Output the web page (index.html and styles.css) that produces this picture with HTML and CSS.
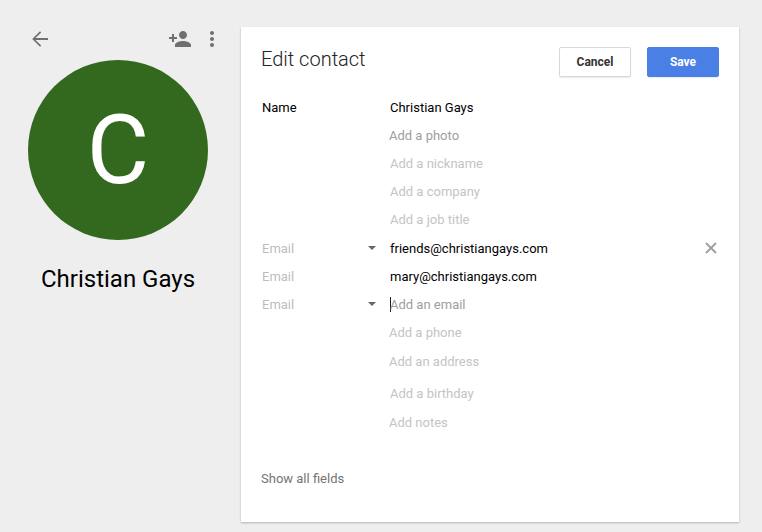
FILE: index.html
```html
<!DOCTYPE html>
<html lang="en">
<head>
    <meta charset="UTF-8">
    <title>Edit contact</title>
    <link rel="stylesheet" href="styles.css">
</head>
<body>
    <div class="page">
        <aside class="side">
            <div class="side-icons">
                <svg class="icon" viewBox="0 0 24 24"><path d="M20 11.1H7.5l5.7-5.7L12 4.2 4.2 12l7.8 7.8 1.2-1.2-5.7-5.7H20z"/></svg>
                <span class="side-actions">
                    <svg class="icon" viewBox="0 0 24 24"><path d="M15 12c2.21 0 4-1.79 4-4s-1.79-4-4-4-4 1.79-4 4 1.79 4 4 4zm-9-2V7H4v3H1v2h3v3h2v-3h3v-2H6zm9 4c-2.67 0-8 1.34-8 4v2h16v-2c0-2.66-5.33-4-8-4z"/></svg>
                    <svg class="icon" viewBox="0 0 24 24"><path d="M12 8c1.1 0 2-.9 2-2s-.9-2-2-2-2 .9-2 2 .9 2 2 2zm0 2c-1.1 0-2 .9-2 2s.9 2 2 2 2-.9 2-2-.9-2-2-2zm0 6c-1.1 0-2 .9-2 2s.9 2 2 2 2-.9 2-2-.9-2-2-2z"/></svg>
                </span>
            </div>
            <div class="avatar">C</div>
            <div class="side-name">Christian Gays</div>
        </aside>

        <main class="card">
            <div class="card-head">
                <h2>Edit contact</h2>
                <div class="buttons">
                    <button type="button" class="button">Cancel</button>
                    <button type="button" class="button button-save">Save</button>
                </div>
            </div>

            <div class="row">
                <span class="row-label dark">Name</span>
                <span class="value">Christian Gays</span>
            </div>
            <div class="row"><span class="row-label"></span><span class="hint mid shift">Add a photo</span></div>
            <div class="row"><span class="row-label"></span><span class="hint">Add a nickname</span></div>
            <div class="row"><span class="row-label"></span><span class="hint">Add a company</span></div>
            <div class="row row-last"><span class="row-label"></span><span class="hint">Add a job title</span></div>

            <div class="row">
                <span class="row-label">Email<i class="caret"></i></span>
                <span class="value">friends@christiangays.com</span>
                <svg class="close" viewBox="0 0 12 12"><path d="M1 1l10 10M11 1L1 11"/></svg>
            </div>
            <div class="row">
                <span class="row-label">Email</span>
                <span class="value">mary@christiangays.com</span>
            </div>
            <div class="row">
                <span class="row-label">Email<i class="caret"></i></span>
                <span class="hint mid cursor">Add an email</span>
            </div>
            <div class="row"><span class="row-label"></span><span class="hint shift">Add a phone</span></div>
            <div class="row row-address"><span class="row-label"></span><span class="hint shift">Add an address</span></div>
            <div class="row row-birthday"><span class="row-label"></span><span class="hint">Add a birthday</span></div>
            <div class="row row-notes"><span class="row-label"></span><span class="hint shift">Add notes</span></div>

            <div class="show-all">Show all fields</div>
        </main>
    </div>
</body>
</html>
```

FILE: styles.css
```css
body {
    font-family: Roboto, Arial, sans-serif;
    background-color: #eeeeee;
    margin: 0;
    padding: 0;
}
.page {
    display: flex;
    width: 762px;
    height: 532px;
    overflow: hidden;
}
.side {
    width: 241px;
    flex: none;
    padding: 27px 0 0 28px;
    box-sizing: border-box;
}
.side-icons {
    display: flex;
    justify-content: space-between;
    width: 196px;
    height: 24px;
}
.side-actions {
    display: flex;
    gap: 8px;
}
.icon {
    width: 24px;
    height: 24px;
    fill: #6f6f6f;
}
.avatar {
    width: 180px;
    height: 180px;
    margin-top: 9px;
    border-radius: 50%;
    background-color: #33691e;
    color: white;
    font-size: 96px;
    font-weight: 400;
    line-height: 180px;
    text-align: center;
}
.side-name {
    width: 180px;
    margin-top: 23px;
    font-size: 24px;
    line-height: 32px;
    color: #000;
    text-align: center;
    white-space: nowrap;
}
.card {
    width: 498px;
    height: 495px;
    margin-top: 27px;
    padding: 20px 20px 0 20px;
    box-sizing: border-box;
    background-color: white;
    box-shadow: 0 1px 2px rgba(0, 0, 0, 0.25);
}
.card-head {
    display: flex;
    justify-content: space-between;
    height: 46px;
}
.card-head h2 {
    margin: 0;
    font-size: 20px;
    font-weight: 300;
    line-height: 24px;
    color: #222;
}
.buttons {
    display: flex;
    gap: 16px;
}
.button {
    width: 72px;
    height: 30px;
    padding: 0;
    font-family: inherit;
    font-size: 12px;
    font-weight: 700;
    color: #333;
    background-color: white;
    border: 1px solid #d9d9d9;
    border-radius: 2px;
    box-shadow: 0 1px 1px rgba(0, 0, 0, 0.08);
}
.button-save {
    color: white;
    background-color: #4a7fe6;
    border-color: #4a7fe6;
}
.row {
    display: flex;
    align-items: center;
    height: 28px;
    font-size: 13px;
    padding-left: 1px;
}
.row-last {
    height: 29px;
}
.row-address {
    height: 30px;
}
.row-birthday {
    height: 33px;
    margin-top: 1px;
}
.row-notes {
    height: 27px;
    margin-top: -1px;
}
.row-label {
    position: relative;
    width: 128px;
    flex: none;
    color: #bdbdbd;
}
.dark {
    color: #000;
}
.caret {
    position: absolute;
    top: 50%;
    left: 106px;
    margin-top: -2px;
    border-left: 4px solid transparent;
    border-right: 4px solid transparent;
    border-top: 4px solid #666;
}
.value {
    color: #000;
}
.hint {
    color: #c4c4c4;
}
.mid {
    color: #9e9e9e;
}
.shift {
    margin-left: -1px;
}
.cursor {
    box-shadow: inset 1px 0 0 #222;
    line-height: 15px;
}
.close {
    width: 12px;
    height: 12px;
    margin-left: auto;
    margin-right: 2px;
    fill: none;
    stroke: #9e9e9e;
    stroke-width: 1.8;
}
.show-all {
    margin-top: 34px;
    font-size: 13px;
    line-height: 18px;
    color: #757575;
}
```
